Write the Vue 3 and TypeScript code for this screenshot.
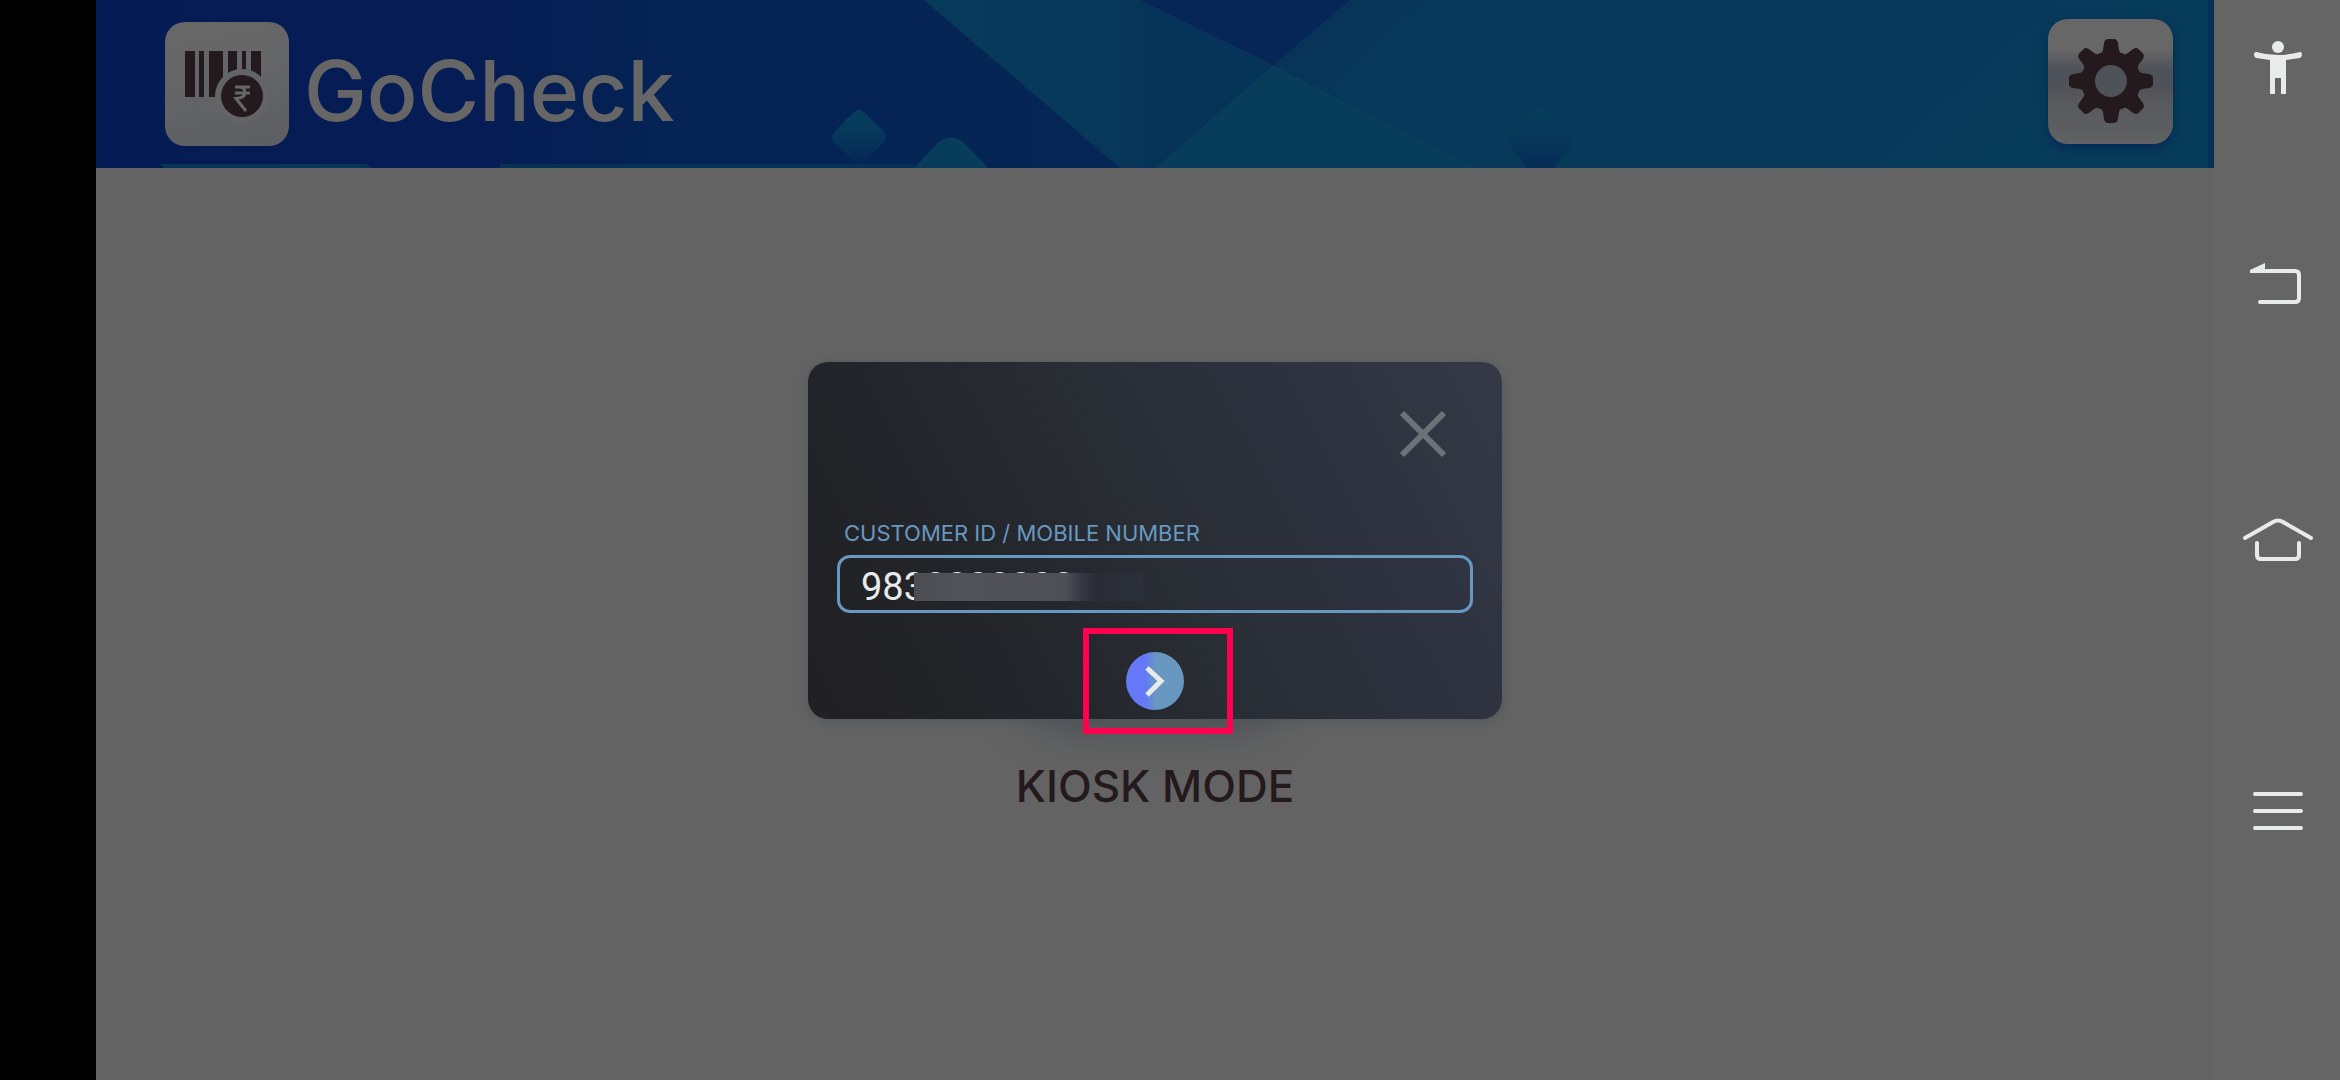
<script setup lang="ts">
import { ref } from 'vue'

const customerId = ref('9830000000')
const gearTeeth: number[] = [0, 45, 90, 135, 180, 225, 270, 315]
</script>

<template>
  <div class="screen">
    <div class="notch"></div>

    <div class="app">
      <header class="header">
        <svg class="header-art" viewBox="0 0 2118 168" preserveAspectRatio="none" aria-hidden="true">
          <defs>
            <linearGradient id="base" x1="0" y1="0" x2="1" y2="0">
              <stop offset="0" stop-color="#051b54" />
              <stop offset="0.17" stop-color="#051c54" />
              <stop offset="0.27" stop-color="#052354" />
              <stop offset="0.5" stop-color="#052656" />
            </linearGradient>
            <linearGradient id="band" x1="0" y1="0" x2="1" y2="0">
              <stop offset="0" stop-color="#073b5a" />
              <stop offset="0.45" stop-color="#07395a" />
              <stop offset="0.65" stop-color="#063458" />
            </linearGradient>
            <linearGradient id="right" x1="0" y1="0" x2="1" y2="0.2">
              <stop offset="0" stop-color="#063056" />
              <stop offset="0.2" stop-color="#073859" />
              <stop offset="1" stop-color="#073b5a" />
            </linearGradient>
            <linearGradient id="gem" x1="0" y1="0" x2="0" y2="1">
              <stop offset="0" stop-color="#073f5c" />
              <stop offset="0.5" stop-color="#06365a" />
              <stop offset="1" stop-color="#052656" />
            </linearGradient>
          </defs>
          <rect width="2118" height="168" fill="url(#base)" />
          <path d="M1254 0H2118V168H1384L1177 65Z" fill="url(#right)" />
          <path d="M828 0H1044L1177 65L1059 168H1024Z" fill="url(#band)" />
          <path d="M1177 65L1384 168H1059Z" fill="#073c5b" />
          <path d="M64 164H270L276 168H68Z" fill="#063558" />
          <path d="M404 164H815L819 168H404Z" fill="#063056" />
          <path d="M757 113q6-6 12 0l18 18q6 6 0 12l-18 18q-6 6-12 0l-18-18q-6-6 0-12Z" fill="url(#gem)" />
          <path d="M818 168L843 142q12-9 24 0L892 168Z" fill="#073d5b" />
          <path d="M1438 109q6-5 12 0l24 27q4 5 0 10L1458 168H1430L1414 146q-4-5 0-10Z" fill="url(#gem)" opacity="0.65" />
          <rect x="2112" width="6" height="168" fill="#063058" />
        </svg>

        <div class="brand">
          <svg class="brand-logo" viewBox="0 0 124 124" aria-hidden="true">
            <defs>
              <linearGradient id="tile" x1="0.4" y1="0" x2="0.6" y2="1">
                <stop offset="0" stop-color="#676767" />
                <stop offset="0.5" stop-color="#636466" />
                <stop offset="1" stop-color="#5d5f63" />
              </linearGradient>
            </defs>
            <rect width="124" height="124" rx="20" fill="url(#tile)" />
            <path
              d="M20 29h10v46H20zM34 29h5v46h-5zM44 29h14v46H44zM63 29h9v46h-9zM77 29h4v46h-4zM86 29h10v46H86z"
              fill="#241a1d"
            />
            <circle cx="77" cy="74" r="27" fill="#636466" />
            <circle cx="77" cy="74" r="21" fill="#241a1d" />
            <path
              d="M70 65H85M70 71H85M70 65H74Q80 65 80 70.500Q80 76 71 76.500L81 89"
              fill="none"
              stroke="#666"
              stroke-width="3"
            />
          </svg>
          <h1 class="brand-name">GoCheck</h1>
        </div>

        <button class="settings" type="button" aria-label="Settings">
          <svg viewBox="-50 -50 100 100" aria-hidden="true">
            <g fill="#241a1d">
              <path
                v-for="angle in gearTeeth"
                :key="angle"
                :transform="`rotate(${angle})`"
                d="M-10 -26L-8 -31L-7 -38Q-6 -42 -3 -42H3Q6 -42 7 -38L8 -31L10 -26Z"
              />
              <circle r="30" />
            </g>
            <circle r="16" fill="#505259" />
          </svg>
        </button>
      </header>

      <main class="content">
        <div class="kiosk">
          <div class="kiosk-tile"></div>
          <h2 class="kiosk-label">KIOSK MODE</h2>
        </div>
      </main>

      <div class="overlay">
        <form class="dialog" role="dialog" aria-label="Customer" @submit.prevent>
          <button class="close" type="button" aria-label="Close">
            <svg viewBox="0 0 50 50" aria-hidden="true">
              <path d="M4 4L46 46M46 4L4 46" stroke="#6b7278" stroke-width="6" />
            </svg>
          </button>
          <label class="label" for="customer-id">CUSTOMER ID / MOBILE NUMBER</label>
          <div class="field">
            <input id="customer-id" v-model="customerId" type="text" inputmode="numeric" />
            <span class="mask"></span>
          </div>
          <div class="actions">
            <button class="submit" type="submit" aria-label="Continue">
              <svg viewBox="0 0 58 58" aria-hidden="true">
                <path d="M21 16L35 29L21 43" fill="none" stroke="#e9ebea" stroke-width="5" />
              </svg>
            </button>
            <span class="highlight"></span>
          </div>
        </form>
      </div>
    </div>

    <nav class="system-nav" aria-label="System">
      <button type="button" aria-label="Accessibility">
        <svg viewBox="0 0 72 72" aria-hidden="true" fill="#e9ebea">
          <circle cx="36" cy="15" r="6" />
          <path d="M14 20Q36 26 58 20Q60 20 60 23Q60 25 58 26L44 28V62H39V46H33V62H28V28L14 26Q12 25 12 23Q12 20 14 20Z" />
        </svg>
      </button>
      <button type="button" aria-label="Back">
        <svg viewBox="0 0 72 72" aria-hidden="true">
          <path d="M18 54H53Q57 54 57 50V27Q57 23 53 23H20" fill="none" stroke="#e9ebea" stroke-width="4" stroke-linecap="round" />
          <path d="M8 25V22L23 15V25Z" fill="#e9ebea" />
        </svg>
      </button>
      <button type="button" aria-label="Home">
        <svg viewBox="0 0 72 72" aria-hidden="true" fill="none" stroke="#e9ebea" stroke-width="4" stroke-linecap="round" stroke-linejoin="round">
          <path d="M3 33L31 17Q36 14 41 17L69 33M15 38V50Q15 54 19 54H53Q57 54 57 50V38" />
        </svg>
      </button>
      <button type="button" aria-label="Recent apps">
        <svg viewBox="0 0 72 72" aria-hidden="true" stroke="#e9ebea" stroke-width="4" stroke-linecap="round">
          <path d="M13 18H59M13 35H59M13 52H59" />
        </svg>
      </button>
    </nav>
  </div>
</template>

<style>
html,
body {
  margin: 0;
  background: #636363;
}
</style>

<style scoped>
.screen {
  display: flex;
  min-height: 100vh;
  font-family: Inter, Roboto, sans-serif;
}
button {
  padding: 0;
  border: 0;
  background: none;
}
svg {
  display: block;
}
.notch {
  flex: 0 0 96px;
  background: #000;
}
.app {
  position: relative;
  display: flex;
  flex: 1;
  flex-direction: column;
  background: #636363;
}
.header {
  position: relative;
  display: flex;
  align-items: center;
  justify-content: space-between;
  box-sizing: border-box;
  height: 168px;
  padding: 0 41px 0 69px;
}
.header-art {
  position: absolute;
  inset: 0;
  width: 100%;
  height: 100%;
}
.brand {
  position: relative;
  display: flex;
  align-items: center;
  gap: 15px;
}
.brand-logo {
  width: 124px;
  height: 124px;
}
.brand-name {
  margin: 0;
  padding-top: 14px;
  color: #666;
  font-size: 84px;
  font-weight: 500;
  line-height: 100px;
}
.settings {
  position: relative;
  display: grid;
  place-items: center;
  width: 125px;
  height: 125px;
  margin-bottom: 6px;
  border-radius: 20px;
  background: linear-gradient(#676767 0 24%, #505259 40% 54%, #56585c 64%, #5b5d60 84%, #626264);
  box-shadow: 0 4px 10px #052a56;
}
.settings svg {
  width: 100px;
  height: 100px;
}
.content {
  display: flex;
  flex: 1;
  justify-content: center;
  align-items: center;
}
.kiosk {
  display: flex;
  flex-direction: column;
  align-items: center;
  gap: 50px;
  padding-bottom: 6px;
}
.kiosk-tile {
  width: 280px;
  height: 280px;
  border-radius: 60px;
  background: #5b5d60;
  box-shadow: 0 20px 40px #474d55;
}
.kiosk-label {
  margin: 0;
  color: #241a1d;
  font-size: 44px;
  font-weight: 500;
  line-height: 56px;
}
.overlay {
  position: absolute;
  inset: 0;
  display: grid;
  place-items: center;
}
.dialog {
  display: flex;
  flex-direction: column;
  box-sizing: border-box;
  width: 694px;
  height: 357px;
  padding: 47px 29px 0;
  border-radius: 20px;
  background: linear-gradient(63deg, #212023, #23262b 30%, #292d34 50%, #2d313d 70%, #343945);
  box-shadow: 0 2px 8px #53565b;
}
.close {
  align-self: flex-end;
  width: 50px;
  height: 50px;
  margin-right: 25px;
}
.label {
  margin: 60px 0 7px 7px;
  color: #6898c0;
  font-size: 22px;
  font-weight: 400;
  line-height: 29px;
}
.field {
  position: relative;
  flex: 0 0 58px;
}
.field input {
  box-sizing: border-box;
  width: 100%;
  height: 58px;
  padding: 7px 21px 0;
  border: 3px solid #6898c0;
  border-radius: 13px;
  outline: 0;
  background: transparent;
  color: #e9ebea;
  font: 400 38px/45px Roboto, Inter, sans-serif;
}
.mask {
  position: absolute;
  top: 18px;
  left: 77px;
  width: 229px;
  height: 28px;
  background: linear-gradient(90deg, #4b4d53, #515358 20%, #4e5056 66%, #353943 73%, #292c34 80%, #2c303a);
}
.actions {
  position: relative;
  align-self: center;
  margin-top: 39px;
}
.highlight {
  position: absolute;
  top: -24px;
  left: -43px;
  box-sizing: border-box;
  width: 150px;
  height: 106px;
  border: 6px solid #ff004f;
  pointer-events: none;
}
.submit {
  display: block;
  width: 58px;
  height: 58px;
  border-radius: 50%;
  background: linear-gradient(90deg, #6478f8 32%, #6898c0 52%);
}
.system-nav {
  display: flex;
  flex: 0 0 126px;
  flex-direction: column;
  align-items: center;
  box-sizing: border-box;
  padding: 32px 0 0 2px;
  background: #656565;
}
.system-nav button {
  width: 72px;
  height: 72px;
}
.system-nav button:nth-child(2) {
  margin-top: 144px;
}
.system-nav button:nth-child(3) {
  margin-top: 185px;
}
.system-nav button:nth-child(4) {
  margin-top: 199px;
}
.system-nav svg {
  width: 72px;
  height: 72px;
}
</style>
